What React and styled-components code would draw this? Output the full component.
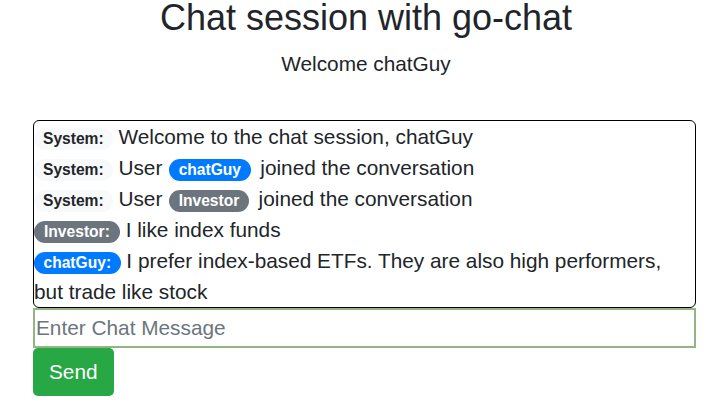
import React from 'react';
import styled, { createGlobalStyle } from 'styled-components';

const GlobalStyle = createGlobalStyle`
  body {
    margin: 0;
    font-family: 'Liberation Sans', Arial, Helvetica, sans-serif;
    color: #212529;
    background: #fff;
  }
`;

const Page = styled.div`
  display: flex;
  flex-direction: column;
  padding: 0 28px 0 33px;
`;

const Title = styled.h1`
  margin: 0;
  font-size: 36px;
  font-weight: 400;
  line-height: 36px;
  text-align: center;
  padding-left: 3px;
`;

const Subtitle = styled.h5`
  margin: 16px 0 44px;
  font-size: 20.8px;
  font-weight: 400;
  line-height: 24px;
  text-align: center;
  padding-left: 3px;
`;

const MessageBox = styled.div`
  border: 1px solid #000;
  border-radius: 6px;
  height: 186px;
  overflow: hidden;
  padding-right: 8px;
  font-size: 20.8px;
  line-height: 31px;
`;

const Message = styled.div``;

const colours = {
  light: { bg: '#f8f9fa', fg: '#212529' },
  primary: { bg: '#007bff', fg: '#fff' },
  secondary: { bg: '#6c757d', fg: '#fff' },
};

const Badge = styled.span`
  display: inline-block;
  font-size: 15.6px;
  font-weight: 700;
  line-height: 1;
  padding: 3px ${(p) => p.$pad || '10px'};
  border-radius: 10rem;
  background: ${(p) => colours[p.$kind].bg};
  color: ${(p) => colours[p.$kind].fg};
  margin: ${(p) => p.$margin || '0'};
`;

const MessageInput = styled.input`
  box-sizing: border-box;
  width: 100%;
  height: 40px;
  margin: 0;
  border: 2px solid #95b483;
  padding: 0 1px;
  font-family: inherit;
  font-size: 20.8px;
  color: #212529;
  outline: none;
  &::placeholder {
    color: #6c757d;
  }
`;

const SendButton = styled.button`
  align-self: flex-start;
  margin-top: 0;
  border: none;
  border-radius: 5px;
  background: #28a745;
  color: #fff;
  font-family: inherit;
  font-size: 20.8px;
  line-height: 30px;
  padding: 9px 16px;
`;

const System = () => (
  <Badge $kind="light" $pad="9px">System:</Badge>
);

const Name = ({ kind, children }) => (
  <Badge $kind={kind} $pad="9.5px" $margin="0 4px 0 1px">{children}</Badge>
);

export default function App() {
  return (
    <>
      <GlobalStyle />
      <Page>
        <Title>Chat session with go-chat</Title>
        <Subtitle>Welcome chatGuy</Subtitle>
        <MessageBox>
          <Message>
            <System /> Welcome to the chat session, chatGuy
          </Message>
          <Message>
            <System /> User <Name kind="primary">chatGuy</Name> joined the
            conversation
          </Message>
          <Message>
            <System /> User <Name kind="secondary">Investor</Name> joined the
            conversation
          </Message>
          <Message>
            <Badge $kind="secondary">Investor:</Badge> I like index funds
          </Message>
          <Message>
            <Badge $kind="primary" $pad="9.5px">chatGuy:</Badge> I prefer
            index-based ETFs. They are also high performers, but trade like
            stock
          </Message>
        </MessageBox>
        <MessageInput placeholder="Enter Chat Message" />
        <SendButton>Send</SendButton>
      </Page>
    </>
  );
}
